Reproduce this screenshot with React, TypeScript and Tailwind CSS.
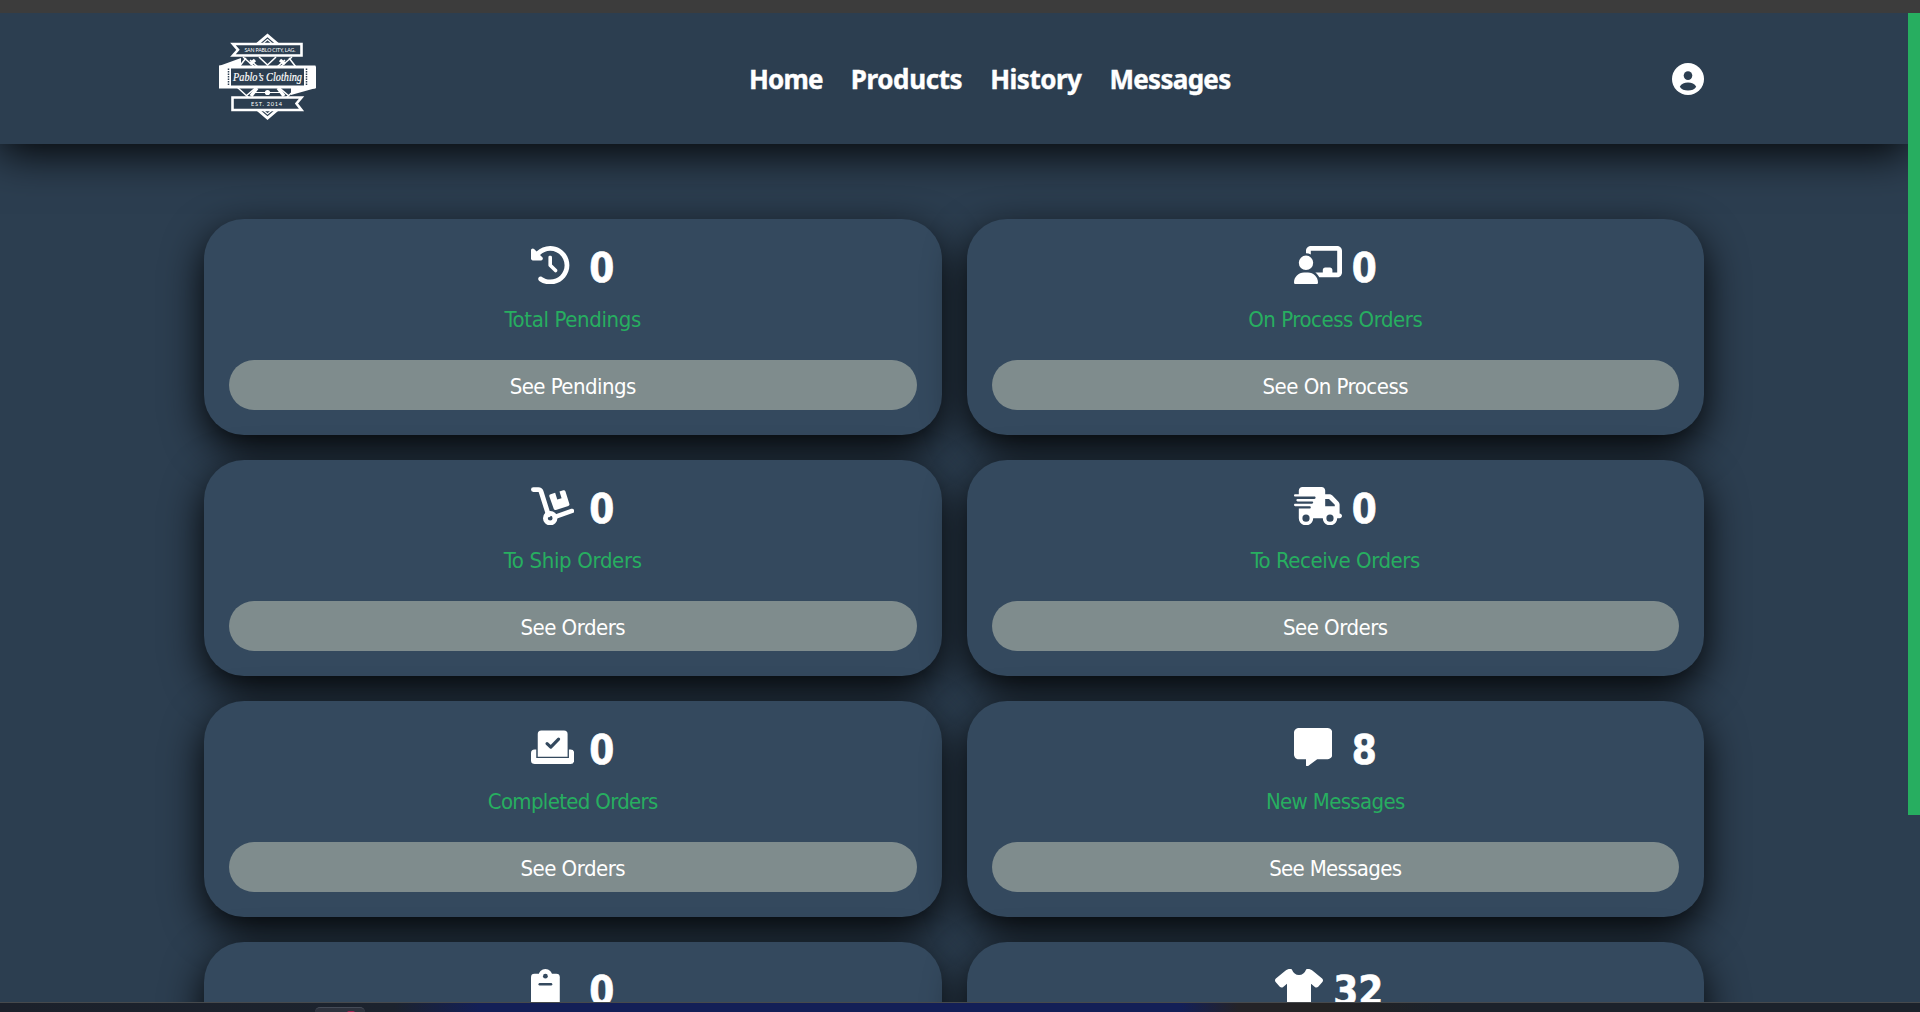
import type { ReactNode } from "react";
import {
  FaClockRotateLeft,
  FaChalkboardUser,
  FaTruckFast,
  FaMessage,
  FaShirt,
} from "react-icons/fa6";

const ICON = "h-[38.4px] w-auto shrink-0";
const WIDE_ICON = "h-[38.4px] w-12 shrink-0";

function DollyIcon() {
  return (
    <svg viewBox="0 0 576 512" className={ICON} fill="none" stroke="currentColor">
      <path d="M32 34H98Q126 34 134 60L232 372" strokeWidth="64" strokeLinecap="round" strokeLinejoin="round" />
      <path d="M330 394L546 320" strokeWidth="60" strokeLinecap="round" />
      <circle cx="256" cy="416" r="64" strokeWidth="64" />
      <path
        d="M262 96L322 78L350 168L408 150L380 60L430 44Q452 38 460 60L512 226Q518 246 498 254L332 306Q312 312 304 292L244 122Q240 102 262 96Z"
        fill="currentColor"
        stroke="none"
      />
    </svg>
  );
}

function BallotIcon() {
  return (
    <svg viewBox="0 0 576 512" className={ICON} fill="currentColor">
      <path d="M0 336Q0 288 48 288H70V400H506V288H528Q576 288 576 336V432Q576 480 528 480H48Q0 480 0 432Z" />
      <path d="M90 80Q90 32 138 32H440Q488 32 488 80V382H90Z" />
      <path d="M214 208L264 256L368 148" fill="none" className="stroke-[#34495e]" strokeWidth="42" strokeLinecap="round" strokeLinejoin="round" />
    </svg>
  );
}

function ClipboardIcon() {
  return (
    <svg viewBox="0 0 384 512" className={ICON} fill="currentColor">
      <rect y="64" width="384" height="448" rx="46" />
      <circle cx="192" cy="92" r="92" />
      <circle cx="192" cy="96" r="32" className="fill-[#34495e]" />
      <rect x="100" y="188" width="184" height="32" rx="16" className="fill-[#34495e]" />
    </svg>
  );
}

function UserIcon() {
  return (
    <svg viewBox="0 0 32 32" className="size-8">
      <circle cx="16" cy="16" r="16" fill="white" />
      <circle cx="16" cy="12.6" r="4.3" className="fill-[#2c3e50]" />
      <path d="M7.8 23.8C9.3 20.7 12.4 19.6 16 19.6S22.7 20.7 24.2 23.8C22.6 26.4 19.6 27.6 16 27.6S9.4 26.4 7.8 23.8Z" className="fill-[#2c3e50]" />
    </svg>
  );
}

function Logo() {
  return (
    <svg viewBox="0 0 97 86" className="h-[86px] w-[97px] overflow-visible" fill="none" stroke="white">
      <path d="M48.500 -0.500L62 11H35ZM48.500 86L62 74.500H35Z" fill="white" stroke="none" />
      <path d="M48.500 3.200L57 10.500H40ZM48.500 82.300L57 75H40Z" fill="#2c3e50" stroke="none" />
      <path d="M44.500 9L48.500 5.500L52.500 9M44.500 76.500L48.500 80L52.500 76.500" strokeWidth="1.200" />
      <path d="M27 24L20 33M70 24L77 33M24 23L70 62M73 23L27 62M18 53L30 64M79 53L67 64" strokeWidth="1.500" />
      <path d="M31 26L39 33M66 26L58 33M40 23L48.500 31L57 23" strokeWidth="1.600" />
      <path d="M31 30L36 26M61 26L66 30M38 54L32 62M59 54L65 62" strokeWidth="3.500" />
      <path d="M0 32L22 24V32ZM97 32V54L72 61V54Z" fill="white" stroke="none" />
      <path d="M36 58.500H61" strokeWidth="1" />
      <circle cx="48.500" cy="58.500" r="2.600" fill="white" stroke="none" />
      <path d="M14 10H82.500V21.500H14L19 15.800Z" fill="#2c3e50" strokeWidth="2.600" />
      <path d="M13.500 63.500H82.500L77.500 69.500L82.500 76H13.500Z" fill="#2c3e50" strokeWidth="2.600" />
      <rect x="0" y="31.500" width="96.500" height="23" fill="white" stroke="none" />
      <rect x="12" y="34.500" width="73" height="17" fill="#2c3e50" stroke="none" />
      <path d="M9.500 34.500V52M87.500 34.500V52" stroke="#2c3e50" strokeWidth="1.500" strokeDasharray="1.500 1" />
      <text x="51" y="17.700" textAnchor="middle" textLength="51" fill="white" stroke="none" className="font-['Lato'] text-[5.200px]">
        SAN PABLO CITY, LAG.
      </text>
      <text x="48.500" y="47" textAnchor="middle" textLength="69" lengthAdjust="spacingAndGlyphs" fill="white" stroke="white" strokeWidth="0.200" className="font-['Liberation_Serif',serif] text-[13px] italic">
        Pablo’s Clothing
      </text>
      <text x="47.500" y="71.800" textAnchor="middle" textLength="31" fill="white" stroke="none" className="font-['Lato'] text-[5.600px]">
        EST. 2014
      </text>
    </svg>
  );
}

type Card = {
  icon: ReactNode;
  count: number;
  label?: string;
  labelTracking?: string;
  action?: string;
  actionTracking?: string;
};

const CARDS: Card[] = [
  { icon: <FaClockRotateLeft className={ICON} />, count: 0, label: "Total Pendings", labelTracking: "tracking-[-0.36px]", action: "See Pendings", actionTracking: "tracking-[-0.54px]" },
  { icon: <FaChalkboardUser className={WIDE_ICON} />, count: 0, label: "On Process Orders", labelTracking: "tracking-[-0.48px]", action: "See On Process", actionTracking: "tracking-[-0.5px]" },
  { icon: <DollyIcon />, count: 0, label: "To Ship Orders", labelTracking: "tracking-[-0.34px]", action: "See Orders", actionTracking: "tracking-[-0.5px]" },
  { icon: <FaTruckFast className={WIDE_ICON} />, count: 0, label: "To Receive Orders", labelTracking: "tracking-[-0.46px]", action: "See Orders", actionTracking: "tracking-[-0.5px]" },
  { icon: <BallotIcon />, count: 0, label: "Completed Orders", labelTracking: "tracking-[-0.68px]", action: "See Orders", actionTracking: "tracking-[-0.5px]" },
  { icon: <FaMessage className={ICON} />, count: 8, label: "New Messages", labelTracking: "tracking-[-0.65px]", action: "See Messages", actionTracking: "tracking-[-0.68px]" },
  { icon: <ClipboardIcon />, count: 0 },
  { icon: <FaShirt className={WIDE_ICON} />, count: 32 },
];

const LINKS = [
  { name: "Home", tracking: "tracking-[-0.8px]" },
  { name: "Products", tracking: "tracking-[-0.4px]" },
  { name: "History", tracking: "tracking-[-0.5px]" },
  { name: "Messages", tracking: "tracking-[-0.7px]" },
];

function StatCard({ card }: { card: Card }) {
  return (
    <article className="h-[216px] rounded-[40px] bg-[#34495e] p-[25px] text-center shadow-[0_14px_40px_rgba(0,0,0,0.95)]">
      <div className={`flex h-12 justify-center gap-2.5 text-white ${card.count > 9 ? "pr-3" : ""}`}>
        <span className="flex w-12 items-start pt-[2px]">{card.icon}</span>
        <span className="text-[40px] leading-[48px] font-bold [-webkit-text-stroke:0.6px_white]">{card.count}</span>
      </div>
      {card.label && (
        <p className={`mt-[15px] text-[22px] leading-[26px] text-[#27ae60] ${card.labelTracking}`}>{card.label}</p>
      )}
      {card.action && (
        <button className={`mt-[27px] block h-[50px] w-full rounded-full bg-[#7f8c8d] pt-0.5 text-[22px] text-white ${card.actionTracking}`}>
          {card.action}
        </button>
      )}
    </article>
  );
}

export default function App() {
  return (
    <div className="flex h-[1012px] flex-col overflow-hidden bg-[#2c3e50] font-['DejaVu_Sans_Condensed','DejaVu_Sans',sans-serif]">
      <div className="h-[13px] shrink-0 bg-[#3c3c3c]" />
      <div className="flex min-h-0 flex-1">
        <div className="min-w-0 flex-1 overflow-hidden">
          <header className="h-[131px] bg-[#2c3e50] shadow-[0_10px_40px_rgba(0,0,0,0.9)]">
            <div className="mx-auto grid h-full w-[1500px] grid-cols-[545px_1fr_auto] items-center">
              <div className="-mt-1 pl-[15px]">
                <Logo />
              </div>
              <nav className="flex gap-7 font-['Noto_Sans',sans-serif] text-[26px] leading-8 font-bold text-white [-webkit-text-stroke:0.4px_white]">
                {LINKS.map((link) => (
                  <a key={link.name} className={link.tracking}>
                    {link.name}
                  </a>
                ))}
              </nav>
              <UserIcon />
            </div>
          </header>
          <main className="mx-auto mt-[75px] grid w-[1500px] grid-cols-2 gap-[25px]">
            {CARDS.map((card, i) => (
              <StatCard key={i} card={card} />
            ))}
          </main>
        </div>
        <div className="w-3 shrink-0">
          <div className="h-[802px] bg-[#27ae60]" />
        </div>
      </div>
      <footer className="h-[10px] shrink-0 border-t border-[#46494c] bg-linear-[90deg,#1c212b_0%,#1c232e_20.5%,#131f57_25%,#131f57_61.5%,#242328_64.5%,#242323_69%,#1c222b_75%,#1c222b_100%]">
        <div className="mt-1 ml-[315px] flex h-[5px] w-[50px] justify-end rounded-t-md border-t border-[#454b57] bg-[#2d323d] pr-2.5">
          <div className="mt-[3px] h-0.5 w-2 rounded-t-full bg-[#a3204f]" />
        </div>
      </footer>
    </div>
  );
}
